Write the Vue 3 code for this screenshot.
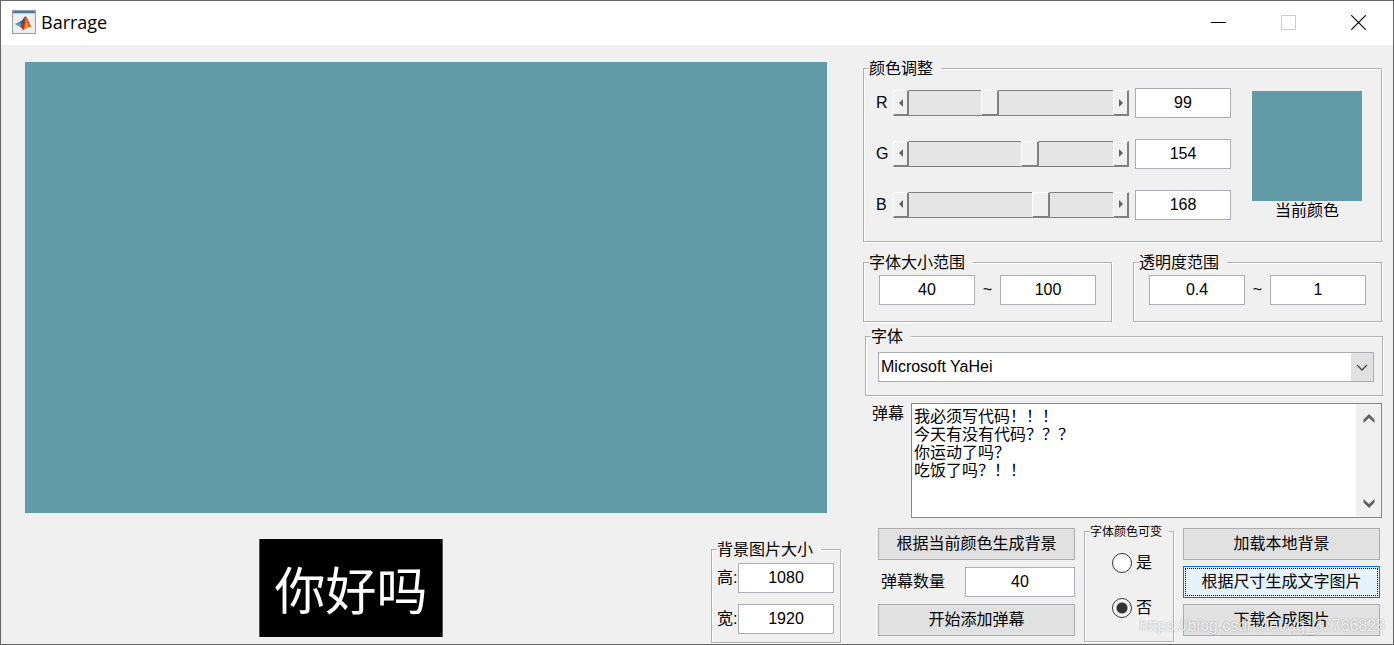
<script setup>
import { computed, reactive, ref } from 'vue'

const channels = reactive([
  { id: 'r', name: 'R', value: 99 },
  { id: 'g', name: 'G', value: 154 },
  { id: 'b', name: 'B', value: 168 },
])
const color = computed(() => `rgb(${channels.map((c) => c.value).join(', ')})`)

const ranges = reactive([
  { id: 'size', title: '字体大小范围', min: '40', max: '100' },
  { id: 'alpha', title: '透明度范围', min: '0.4', max: '1' },
])
const dimensions = reactive([
  { id: 'height', name: '高:', value: '1080' },
  { id: 'width', name: '宽:', value: '1920' },
])

const font = ref('Microsoft YaHei')
const messages = ref('我必须写代码！！！\n今天有没有代码？？？\n你运动了吗？\n吃饭了吗？！！')
const count = ref('40')
const variable = ref('no')

function step(channel, delta) {
  channel.value = Math.min(255, Math.max(0, Number(channel.value) + delta))
}
</script>

<template>
  <div class="window">
    <header class="titlebar">
      <svg class="logo" viewBox="0 0 24 24" aria-hidden="true">
        <rect x="0.5" y="0.5" width="23" height="23" fill="#eceef0" stroke="#9a9ea4" />
        <rect x="1" y="1" width="22" height="2" fill="#4a7ba9" />
        <path d="M1 3.5H23" stroke="#b9cbdc" />
        <path d="M3 14L8 11.5L10.5 14L7.5 16.5Z" fill="#4a9cc9" />
        <path d="M8 11.5C10.5 11 11.5 7.5 13.5 6L11.5 14L9.5 14.5Z" fill="#2b5580" />
        <path d="M7.5 16.5C10.5 15 12 10 13.5 6L14.5 14L11 20.5C10 18 9 17 7.5 16.5Z" fill="#b5361d" />
        <path d="M13.5 6C16 7.5 17.5 15 20 17.5C17.5 15.5 15 17.5 11 20.5C12.5 16 13.5 11 13.5 6Z" fill="#e2571c" />
        <path d="M13.6 9C14.4 11 14.5 15 12 19C13.5 17.7 14.8 16.8 16 16.2C15.5 13 14.6 10.5 13.6 9Z" fill="#f5a328" />
      </svg>
      <h1>Barrage</h1>
      <div class="controls">
        <button type="button" aria-label="最小化">
          <svg viewBox="0 0 15 15"><path d="M0 7.5H15" stroke="#000" /></svg>
        </button>
        <button type="button" aria-label="最大化" disabled>
          <svg viewBox="0 0 15 15"><rect x="0.5" y="0.5" width="14" height="14" fill="none" stroke="#ccc" /></svg>
        </button>
        <button type="button" aria-label="关闭">
          <svg viewBox="0 0 15 15"><path d="M0.3 0.3L14.7 14.7M14.7 0.3L0.3 14.7" stroke="#000" stroke-width="1.1" /></svg>
        </button>
      </div>
    </header>

    <main>
      <section class="left">
        <div class="canvas" :style="{ background: color }"></div>
        <div class="below">
          <div class="preview">你好吗</div>
          <fieldset class="dims">
            <legend>背景图片大小</legend>
            <div class="body">
              <div v-for="d in dimensions" :key="d.id" class="dim">
                <label :for="d.id">{{ d.name }}</label>
                <input :id="d.id" v-model="d.value" class="box" type="text" />
              </div>
            </div>
          </fieldset>
        </div>
      </section>

      <section class="right">
        <fieldset class="colors">
          <legend>颜色调整</legend>
          <div class="body">
            <div class="channels">
              <div v-for="c in channels" :key="c.id" class="channel">
                <label :for="c.id">{{ c.name }}</label>
                <div class="slider">
                  <button type="button" aria-label="减少" @click="step(c, -1)">
                    <svg viewBox="0 0 4 8"><path d="M4 0V8L0 4Z" fill="#606060" /></svg>
                  </button>
                  <input v-model="c.value" type="range" min="0" max="255" :aria-label="c.name" />
                  <button type="button" aria-label="增加" @click="step(c, 1)">
                    <svg viewBox="0 0 4 8"><path d="M0 0V8L4 4Z" fill="#606060" /></svg>
                  </button>
                </div>
                <input :id="c.id" v-model="c.value" class="box" type="text" />
              </div>
            </div>
            <div class="current">
              <div class="swatch" :style="{ background: color }"></div>
              <span>当前颜色</span>
            </div>
          </div>
        </fieldset>

        <div class="ranges">
          <fieldset v-for="r in ranges" :key="r.id">
            <legend>{{ r.title }}</legend>
            <div class="body">
              <input v-model="r.min" class="box" type="text" :aria-label="r.title" />
              <span>~</span>
              <input v-model="r.max" class="box" type="text" :aria-label="r.title" />
            </div>
          </fieldset>
        </div>

        <fieldset class="font">
          <legend>字体</legend>
          <div class="body">
            <div class="combo">
              <select v-model="font" aria-label="字体">
                <option>Microsoft YaHei</option>
              </select>
              <span class="drop">
                <svg viewBox="0 0 12 7"><path d="M1 1L6 6L11 1" fill="none" stroke="#444" stroke-width="1.3" /></svg>
              </span>
            </div>
          </div>
        </fieldset>

        <div class="messages">
          <label for="messages">弹幕</label>
          <div class="editor">
            <textarea id="messages" v-model="messages" spellcheck="false"></textarea>
            <div class="scroll">
              <button type="button" aria-label="向上">
                <svg viewBox="0 0 12 9"><path d="M0.5 9V5.5L6 0L11.5 5.5V9L6 4Z" fill="#606060" /></svg>
              </button>
              <button type="button" aria-label="向下">
                <svg viewBox="0 0 12 9"><path d="M0.5 0V3.5L6 9L11.5 3.5V0L6 5Z" fill="#606060" /></svg>
              </button>
            </div>
          </div>
        </div>

        <div class="actions">
          <div class="stack">
            <button type="button" class="push">根据当前颜色生成背景</button>
            <div class="count">
              <label for="count">弹幕数量</label>
              <input id="count" v-model="count" class="box" type="text" />
            </div>
            <button type="button" class="push">开始添加弹幕</button>
          </div>
          <fieldset class="variable">
            <legend>字体颜色可变</legend>
            <div class="body">
              <label><input v-model="variable" type="radio" name="variable" value="yes" />是</label>
              <label><input v-model="variable" type="radio" name="variable" value="no" />否</label>
            </div>
          </fieldset>
          <div class="stack">
            <button type="button" class="push">加载本地背景</button>
            <button type="button" class="push active">根据尺寸生成文字图片</button>
            <button type="button" class="push">下载合成图片</button>
          </div>
        </div>
      </section>
    </main>
    <div class="watermark">https://blog.csdn.net/qq_37766828</div>
  </div>
</template>

<style>
body {
  margin: 0;
}
</style>

<style scoped>
* {
  box-sizing: border-box;
}
.window {
  position: relative;
  display: flex;
  flex-direction: column;
  min-height: 100vh;
  border: 1px solid #666;
  background: #f0f0f0;
  color: #000;
  font: 400 16px/18px "Liberation Sans", "Noto Sans CJK SC", sans-serif;
}
button,
input,
select,
textarea {
  margin: 0;
  padding: 0;
  border: 0;
  border-radius: 0;
  outline: 0;
  color: inherit;
  font: inherit;
}
svg {
  display: block;
}

.titlebar {
  display: flex;
  align-items: center;
  height: 44px;
  padding: 0 0 2px 11px;
  background: #fff;
}
.logo {
  width: 24px;
  height: 24px;
}
h1 {
  flex: 1;
  margin: 0 0 0 5px;
  font: 400 18px/24px "Open Sans", "Noto Sans", sans-serif;
}
.controls {
  display: flex;
}
.controls button {
  display: grid;
  place-items: center;
  width: 70px;
  height: 42px;
  background: none;
}
.controls svg {
  width: 15px;
  height: 15px;
}

main {
  display: flex;
  flex: 1;
  gap: 22px;
  padding: 13px 11px 0 24px;
}
.left {
  flex: 1;
  min-width: 0;
  padding-top: 4px;
}
.canvas {
  margin-right: 14px;
  aspect-ratio: 16 / 9;
}
.below {
  display: grid;
  grid-template-columns: 234fr 184px 268fr 130px;
  align-items: start;
  margin-top: 26px;
}
.preview {
  grid-column: 2;
  height: 98px;
  padding-top: 10px;
  border: solid #555;
  border-width: 0 1px;
  background: #000;
  color: #fff;
  font-size: 51px;
  line-height: 88px;
  text-align: center;
}

fieldset {
  min-width: 0;
  margin: 0;
  padding: 0;
  border: 1px solid #b0b0b0;
  box-shadow: 1px 1px 0 #fff, inset 1px 1px 0 #fff;
}
legend {
  margin-left: 5px;
  padding: 2px 8px 0 0;
  background: #f0f0f0;
}
.box {
  width: 96px;
  height: 30px;
  border: 1px solid #abadb3;
  background: #fff;
  text-align: center;
}

.dims {
  grid-column: 4;
}
.dims .body {
  display: grid;
  gap: 11px;
  padding: 4px 6px 8px 5px;
}
.dim {
  display: flex;
  align-items: center;
  justify-content: space-between;
}

.right {
  width: 519px;
}
.colors .body {
  display: flex;
  gap: 21px;
  padding: 10px 19px 21px 12px;
}
.channels {
  display: grid;
  flex: 1;
  gap: 20px;
}
.channel {
  display: flex;
  align-items: center;
}
.channel label {
  width: 17px;
}
.slider {
  display: flex;
  flex: 1;
  height: 26px;
  margin-right: 6px;
}
.slider button {
  display: grid;
  flex: none;
  place-items: center;
  width: 16px;
  border: solid;
  border-width: 1px 2px 2px 1px;
  border-color: #fff #808080 #808080 #fff;
  background: #f0f0f0;
}
.slider svg {
  width: 4px;
  height: 8px;
}
.slider input {
  flex: 1;
  min-width: 0;
  height: 26px;
  border: solid #808080;
  border-width: 1px 0;
  background: #e5e5e5;
  appearance: none;
}
.slider input::-webkit-slider-thumb {
  width: 18px;
  height: 26px;
  border: solid;
  border-width: 1px 2px 2px 1px;
  border-color: #fff #808080 #808080 #fff;
  border-radius: 0;
  background: #f0f0f0;
  appearance: none;
}
.current {
  width: 110px;
  padding-top: 3px;
  text-align: center;
}
.swatch {
  height: 110px;
}
.current span {
  display: block;
  padding-top: 1px;
}

.ranges {
  display: grid;
  grid-template-columns: 1fr 1fr;
  gap: 21px;
  margin-top: 10px;
}
.ranges .body {
  display: flex;
  align-items: center;
  justify-content: space-between;
  padding: 3px 15px 16px;
}

.font {
  margin: 4px -1px 0 2px;
}
.font .body {
  padding: 6px 8px 13px 12px;
}
.combo {
  display: flex;
  position: relative;
  height: 30px;
}
select {
  width: 100%;
  padding-left: 2px;
  border: 1px solid #abadb3;
  background: #fff;
  appearance: none;
}
.drop {
  display: grid;
  position: absolute;
  top: 1px;
  right: 1px;
  bottom: 1px;
  place-items: center;
  width: 22px;
  background: #e1e1e1;
  pointer-events: none;
}
.drop svg {
  width: 12px;
  height: 7px;
}

.messages {
  display: flex;
  height: 115px;
  margin-top: 7px;
  padding-left: 9px;
}
.messages label {
  width: 39px;
  padding-top: 2px;
}
.editor {
  display: flex;
  flex: 1;
  border: 1px solid #828790;
  background: #fff;
}
textarea {
  flex: 1;
  min-width: 0;
  padding: 4px 2px;
  overflow: hidden;
  background: none;
  resize: none;
}
.scroll {
  display: flex;
  flex-direction: column;
  justify-content: space-between;
  width: 25px;
  background: #f0f0f0;
}
.scroll button {
  display: grid;
  place-items: center;
  height: 28px;
  background: none;
}
.scroll svg {
  width: 12px;
  height: 9px;
}

.actions {
  display: flex;
  justify-content: space-between;
  margin-top: 3px;
  padding: 0 2px 0 15px;
}
.stack {
  display: grid;
  align-content: start;
  gap: 6px;
  width: 197px;
  padding-top: 7px;
}
.push {
  height: 32px;
  border: 1px solid #adadad;
  background: #e1e1e1;
}
.push.active {
  border-color: #0078d7;
  outline: 1px dotted #000;
  outline-offset: -3px;
  background: #e5f1fb;
}
.count {
  display: flex;
  align-items: center;
  justify-content: space-between;
  height: 32px;
  padding-left: 3px;
}
.count .box {
  width: 110px;
}
.variable {
  width: 90px;
}
.variable legend {
  padding-right: 7px;
  font-size: 12px;
}
.variable .body {
  display: grid;
  gap: 25px;
  padding: 12px 0 23px 27px;
}
.variable label {
  display: flex;
  align-items: center;
  gap: 4px;
  height: 20px;
}
.variable input {
  width: 20px;
  height: 20px;
  border: 1px solid #333;
  border-radius: 50%;
  background: #fff;
  appearance: none;
}
.variable input:checked {
  background: radial-gradient(circle, #333 5px, #fff 6px);
}

.watermark {
  position: absolute;
  right: 8px;
  bottom: 9px;
  color: rgba(255, 255, 255, 0.75);
  text-shadow: 0 0 2px rgba(0, 0, 0, 0.3);
  pointer-events: none;
}
</style>
